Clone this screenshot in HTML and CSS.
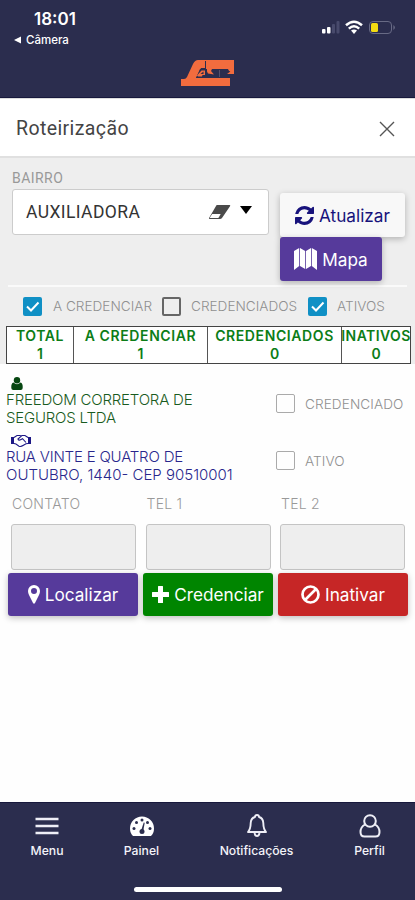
FILE: index.html
```html
<!DOCTYPE html>
<html lang="pt-BR">
<head>
<meta charset="utf-8">
<meta name="viewport" content="width=device-width, initial-scale=1">
<title>Roteirização</title>
<link rel="stylesheet" href="styles.css">
</head>
<body>
<header class="top">
  <div class="status">
    <div class="clock"><strong>18:01</strong><span class="back"><svg width="8" height="8" viewBox="0 0 8 8"><path d="M0 4 7 .5v7z" fill="#fff"/></svg>Câmera</span></div>
    <svg class="signals" width="76" height="16" viewBox="0 0 76 16">
      <g fill="#fff"><rect x="0" y="9" width="3.5" height="4.5" rx="1"/><rect x="5" y="7" width="3.5" height="6.5" rx="1"/></g>
      <g fill="#484a6c"><rect x="10" y="4" width="3" height="9.5" rx="1"/><rect x="14.500" y="1" width="3" height="12.500" rx="1"/></g>
      <g fill="none" stroke="#fff" stroke-width="2.500"><path d="M24 5.200q8-7 16 0M26.800 8.600q5.200-4.600 10.400 0"/></g><path d="M29 10.600q3-2 6 0l-3 3.400z" fill="#fff"/>
      <rect x="47.500" y="1.500" width="22" height="12" rx="3.500" fill="none" stroke="#686a85"/><rect x="49" y="3" width="7" height="9" rx="1.500" fill="#f4dc12"/><path d="M71.500 5q2.500 2.500 0 5z" fill="#777991"/>
    </svg>
  </div>
  <svg class="logo" width="54" height="27" viewBox="0 0 54 27">
    <path fill="#f26c3e" d="M0 26v-7h3q2 0 3-2l6-13q2-4 5-4h36v14l-6-3.500V9H25V1h-1v7h-4l-5 10h34v8z"/>
    <path fill="#2b2d4e" d="M24 9h23l1 2 5 3.500H48V18H15l4-9z"/>
    <path fill="#f26c3e" d="m16 15.500 4.500-5h3.500v4.500h-2.500l-.5 1.500h-4zM26 9h5l-1 2 3 3.500-6-1-1-2zM53 9v5h-7l4-3-2-2z"/>
    <path fill="#2b2d4e" d="m19.500 14 3-2.500V14z"/>
    <path fill="#55506a" d="M38 10h1v7h-1z"/>
  </svg>
</header>

<div class="titlebar">
  <h1>Roteirização</h1>
  <svg width="16" height="16" viewBox="0 0 16 16"><path d="m1 1 14 14M15 1 1 15" fill="none" stroke="#555" stroke-width="1.400"/></svg>
</div>

<main>
  <section class="filters">
    <div class="search">
      <div class="field">
        <label>BAIRRO</label>
        <div class="select">
          <span>AUXILIADORA</span>
          <svg width="23" height="16" viewBox="0 0 23 16"><path d="M9 1h12.500q1.300 0 .5 1.200L14 14q-.7 1-2 1H2q-1.700 0-.8-1.300L8 2q.4-1 1-1z" fill="#4a4a4a"/><path d="M4.200 10h8.500l-2 3.500q-.4.500-1 .5H2.500q-1 0-.5-.8z" fill="#fff"/></svg>
          <svg class="caret" width="12" height="8" viewBox="0 0 12 8"><path d="M0 0h12L6 8z" fill="#000"/></svg>
        </div>
      </div>
      <div class="actions">
        <button class="btn light"><svg width="19" height="19" viewBox="0 0 1536 1536"><path fill="currentColor" d="M1511 928q0 5-1 7-64 268-268 434.500T764 1536q-146 0-282.500-55T238 1324l-129 129q-19 19-45 19t-45-19-19-45V960q0-26 19-45t45-19h448q26 0 45 19t19 45-19 45l-137 137q71 66 161 102t187 36q134 0 250-65t186-179q11-17 53-117 8-23 30-23h192q13 0 22.500 9.500t9.500 22.500zm25-800v448q0 26-19 45t-45 19h-448q-26 0-45-19t-19-45 19-45l138-138Q969 256 768 256q-134 0-250 65T332 500q-11 17-53 117-8 23-30 23H50q-13 0-22.500-9.500T18 608v-7q65-268 270-434.500T768 0q146 0 284 55.500T1297 212l130-129q19-19 45-19t45 19 19 45z"/></svg><span>Atualizar</span></button>
        <button class="btn purple map"><svg width="23" height="22" viewBox="0 0 23 22"><path fill="#fff" d="M0 3 5.200 0v18L0 22zM6 0l5.200 3v18L6 18zM12 3l5-3v18l-5 3zM17.800 0 23 3v19l-5.200-4z"/></svg><span>Mapa</span></button>
      </div>
    </div>
    <div class="checks">
      <i class="box on"><svg width="19" height="19" viewBox="0 0 19 19"><path d="m4 9.500 4 4L15.500 5.500"/></svg></i><span class="c1">A CREDENCIAR</span>
      <i class="box"></i><span class="c2">CREDENCIADOS</span>
      <i class="box on"><svg width="19" height="19" viewBox="0 0 19 19"><path d="m4 9.500 4 4L15.500 5.500"/></svg></i><span class="c3">ATIVOS</span>
    </div>
    <div class="totals">
      <div><span>TOTAL</span><b>1</b></div>
      <div><span>A CREDENCIAR</span><b>1</b></div>
      <div><span>CREDENCIADOS</span><b>0</b></div>
      <div><span class="tight">INATIVOS</span><b>0</b></div>
    </div>
  </section>

  <section class="entry">
    <div class="details">
      <div class="who">
        <svg width="12" height="13" viewBox="0 0 12 13"><circle cx="6" cy="3.300" r="3.200"/><path d="M2.500 5.500Q0 6 .3 11q.1 2 2 2h7.400q1.900 0 2-2Q12 6 9.500 5.500 6 9 2.500 5.500z"/></svg>
        <p>FREEDOM CORRETORA DE<br>SEGUROS LTDA</p>
      </div>
      <div class="where">
        <svg width="20" height="13" viewBox="0 0 20 13"><path d="M0 3h3v7H0zM17 3h3v7h-3z" fill="#1c1785"/><path d="M3 3.500 6 1.500h3l1 .8 1-.8h3l3 2M3 9.500l2 .5 3 2.200q2 .7 4-.7l3-1.800 2-.2M10 2.300 7 5q.5 2 3 .5l1.500-.8L15 8.500" fill="none" stroke="#1c1785" stroke-width="1.100"/></svg>
        <p><span class="street">RUA VINTE E QUATRO DE</span><br><span>OUTUBRO, 1440- CEP 90510001</span></p>
      </div>
    </div>
    <div class="flags">
      <div><i class="box thin"></i><span>CREDENCIADO</span></div>
      <div><i class="box thin"></i><span>ATIVO</span></div>
    </div>
  </section>

  <section class="contacts">
    <div><label>CONTATO</label><div class="input"></div></div>
    <div><label>TEL 1</label><div class="input"></div></div>
    <div><label>TEL 2</label><div class="input"></div></div>
  </section>
  <section class="buttons">
    <button class="btn purple"><svg width="12" height="19" viewBox="0 0 12 19"><path fill="#fff" fill-rule="evenodd" d="M6 0a6 6 0 0 1 6 6q0 2-1 4L7 18q-1 1.500-2 0L1 10Q0 8 0 6a6 6 0 0 1 6-6zm0 3a3 3 0 1 0 0 6 3 3 0 0 0 0-6z"/></svg><span>Localizar</span></button>
    <button class="btn green"><svg width="17" height="17" viewBox="0 0 17 17"><path fill="#fff" d="M6.500 0h4q.5 0 .5.500V6h5.500q.5 0 .5.500v4q0 .5-.5.500H11v5.500q0 .5-.5.500h-4q-.5 0-.5-.5V11H.5q-.5 0-.5-.5v-4Q0 6 .5 6H6V.5q0-.5.5-.5z"/></svg><span>Credenciar</span></button>
    <button class="btn red"><svg width="19" height="19" viewBox="0 0 19 19"><g fill="none" stroke="#fff" stroke-width="2.700"><circle cx="9.500" cy="9.500" r="8"/><path d="M4 15 15 4"/></g></svg><span>Inativar</span></button>
  </section>
</main>

<footer>
  <nav>
    <a><svg width="24" height="24" viewBox="0 0 24 24"><path d="M.5 5h23M.5 12h23M.5 19h23" stroke="#eeeef6" stroke-width="2.400" fill="none"/></svg><span>Menu</span></a>
    <a><svg width="26" height="24" viewBox="0 0 26 24"><path fill="#fff" d="M4 22q-3-3-3-7.500a12 12 0 0 1 24 0q0 4.500-3 7.500z"/><g fill="#2b2d4e"><circle cx="5" cy="14.500" r="1.500"/><circle cx="7.500" cy="8.500" r="1.500"/><circle cx="13" cy="6" r="1.500"/><circle cx="18.500" cy="8.500" r="1.500"/><circle cx="21" cy="14.500" r="1.500"/><circle cx="13" cy="17.500" r="2.500"/><path d="m12 17 2.700-8.500 1 .3-1.500 8.500z"/></g></svg><span>Painel</span></a>
    <a><svg width="20" height="24" viewBox="0 0 20 24"><path d="M8 3q0-2 2-2t2 2q4 1 4.300 6 .1 6 2.700 9H1q2.600-3 2.700-9Q4 4 8 3zM7.500 19q.5 3 2.500 3t2.500-3" fill="none" stroke="#eeeef6" stroke-width="1.900" stroke-linejoin="round"/></svg><span>Notificações</span></a>
    <a><svg width="22" height="24" viewBox="0 0 22 24"><g fill="none" stroke="#eeeef6" stroke-width="2"><circle cx="11" cy="7" r="5.800"/><path d="M6 10.500Q1.500 13 1.500 18q0 4.500 4 4.500h11q4 0 4-4.500 0-5-4.500-7.500"/></g></svg><span>Perfil</span></a>
  </nav>
  <div class="home"></div>
</footer>
</body>
</html>
```
FILE: styles.css
```css
* { box-sizing: border-box; }
body {
  margin: 0;
  width: 415px;
  height: 900px;
  display: flex;
  flex-direction: column;
  overflow: hidden;
  background: #fefefe;
  color: #333;
  font-family: Inter, "Liberation Sans", sans-serif;
}
svg { display: block; flex: none; }
span { white-space: nowrap; }
.top { height: 98px; background: #2b2d4e; border-bottom: 1px solid #17183c; display: flex; flex-direction: column; align-items: center; }
.status { width: 100%; height: 60px; display: flex; justify-content: space-between; padding: 10px 17px 0 14px; color: #fff; }
.clock strong { display: block; margin-left: 20px; font-size: 17px; line-height: 19px; font-weight: 600; }
.back { display: flex; align-items: center; gap: 4px; font-size: 11.500px; line-height: 14px; margin-top: 4px; font-weight: 500; }
.signals { margin-top: 10px; }
.titlebar { height: 60px; padding: 3px 20px 0 16px; display: flex; align-items: center; justify-content: space-between; background: #fff; border-top: 1px solid #ddd; border-bottom: 2px solid #e0e0e0; }
h1 { margin: 0; font: 400 19.500px/24px Roboto, sans-serif; letter-spacing: .4px; color: #444; }
.filters { height: 206px; background: #eee; }
.search { height: 129px; margin: 0 8px; padding: 12px 2px 0 4px; display: flex; gap: 10px; border-bottom: 2px solid #fafafa; }
label { display: block; color: #999; font-size: 14px; line-height: 18px; font-weight: 300; white-space: nowrap; letter-spacing: .25px; padding-left: 1px; }
.field { width: 258px; }
.field label { padding: 0; line-height: 16px; font-family: Roboto, sans-serif; font-weight: 400; letter-spacing: .45px; }
.select { height: 46px; margin-top: 3px; padding: 0 16px 0 13px; display: flex; align-items: center; background: #fff; border: 1px solid #ccc; border-radius: 3px; color: #333; font: 400 17.500px Roboto, sans-serif; letter-spacing: .4px; }
.select svg:first-of-type { margin-left: auto; }
.caret { margin-left: 9px; margin-bottom: 4px; }
.actions { padding-top: 23px; }
.btn { width: 100%; height: 44px; padding: 0; display: flex; align-items: center; justify-content: center; gap: 5px; border: 0; border-radius: 3px; color: #fff; font: 400 17.200px Inter, sans-serif; box-shadow: 0 2px 6px rgba(0, 0, 0, .25); }
.btn.light { width: 125px; margin-left: 1px; background: #f8f8f8; color: #17127b; }
.btn.map { width: 102px; margin-left: 1px; }
.purple { background: #563a9b; }
.green { background: #008500; }
.red { background: #c62626; }
.checks { height: 39px; display: flex; align-items: center; padding: 0 0 1px 23px; font-size: 13.600px; font-weight: 300; color: #909090; }
.box { display: block; flex: none; width: 19px; height: 19px; border: 2px solid #666; border-radius: 2px; }
.box.on { border: 0; background: #1090c5; }
.box path { fill: none; stroke: #fff; stroke-width: 2; }
.box.thin { border: 1.500px solid #aaa; }
.c1 { width: 98px; margin: 0 11px; }
.c2 { width: 107px; margin: 0 10px; }
.c3 { margin-left: 10px; }
.totals { display: grid; grid-template-columns: 67px 134px 134px 68px; margin: 0 4px 0 6px; width: 405px; height: 38px; border: 1px solid #444; background: #fff; color: #0c7d17; font-size: 14px; line-height: 18px; font-weight: 600; text-align: center; }
.totals div { display: flex; flex-direction: column; align-items: center; border-right: 1px solid #555; }
.totals div:last-child { border-right: 0; }
.totals b { font-weight: 600; }
.totals span { letter-spacing: .6px; }
.totals .tight { letter-spacing: .4px; }
.entry { display: flex; height: 120px; padding: 13px 0 0 6px; font-size: 15px; font-weight: 300; line-height: 18px; }
.details { width: 270px; }
.details p { margin: 1px 0 0; }
.details svg { margin-left: 5px; }
.who { height: 57px; color: #185b20; letter-spacing: -.2px; }
.who svg { fill: #064611; }
.where { color: #29268c; }
.street { letter-spacing: -.2px; }
.flags { padding-top: 17px; color: #909090; font-size: 13.600px; }
.flags div { display: flex; align-items: center; gap: 10px; height: 19px; margin-bottom: 38px; letter-spacing: .08px; }
.contacts { display: grid; grid-template-columns: repeat(3, 125px); gap: 9.500px; padding: 11px 11px 0; height: 89px; }
.input { height: 46px; margin-top: 11px; border: 1px solid #c4c4c4; border-radius: 3px; background: #eee; }
.buttons { display: grid; grid-template-columns: repeat(3, 130px); gap: 5px; padding: 0 8px; }
.buttons .btn { height: 43px; }
footer { margin-top: auto; height: 98px; background: #2b2d4e; border-top: 1px solid #17183c; color: #f4f4fa; }
nav { display: grid; grid-template-columns: 94px 95px 135px 91px; height: 83px; padding-top: 11px; }
nav a { display: flex; flex-direction: column; align-items: center; gap: 6px; font-size: 12.200px; line-height: 14px; font-weight: 500; }
.home { width: 148px; height: 5px; margin: 1px 0 0 134px; border-radius: 3px; background: #fff; }
```
